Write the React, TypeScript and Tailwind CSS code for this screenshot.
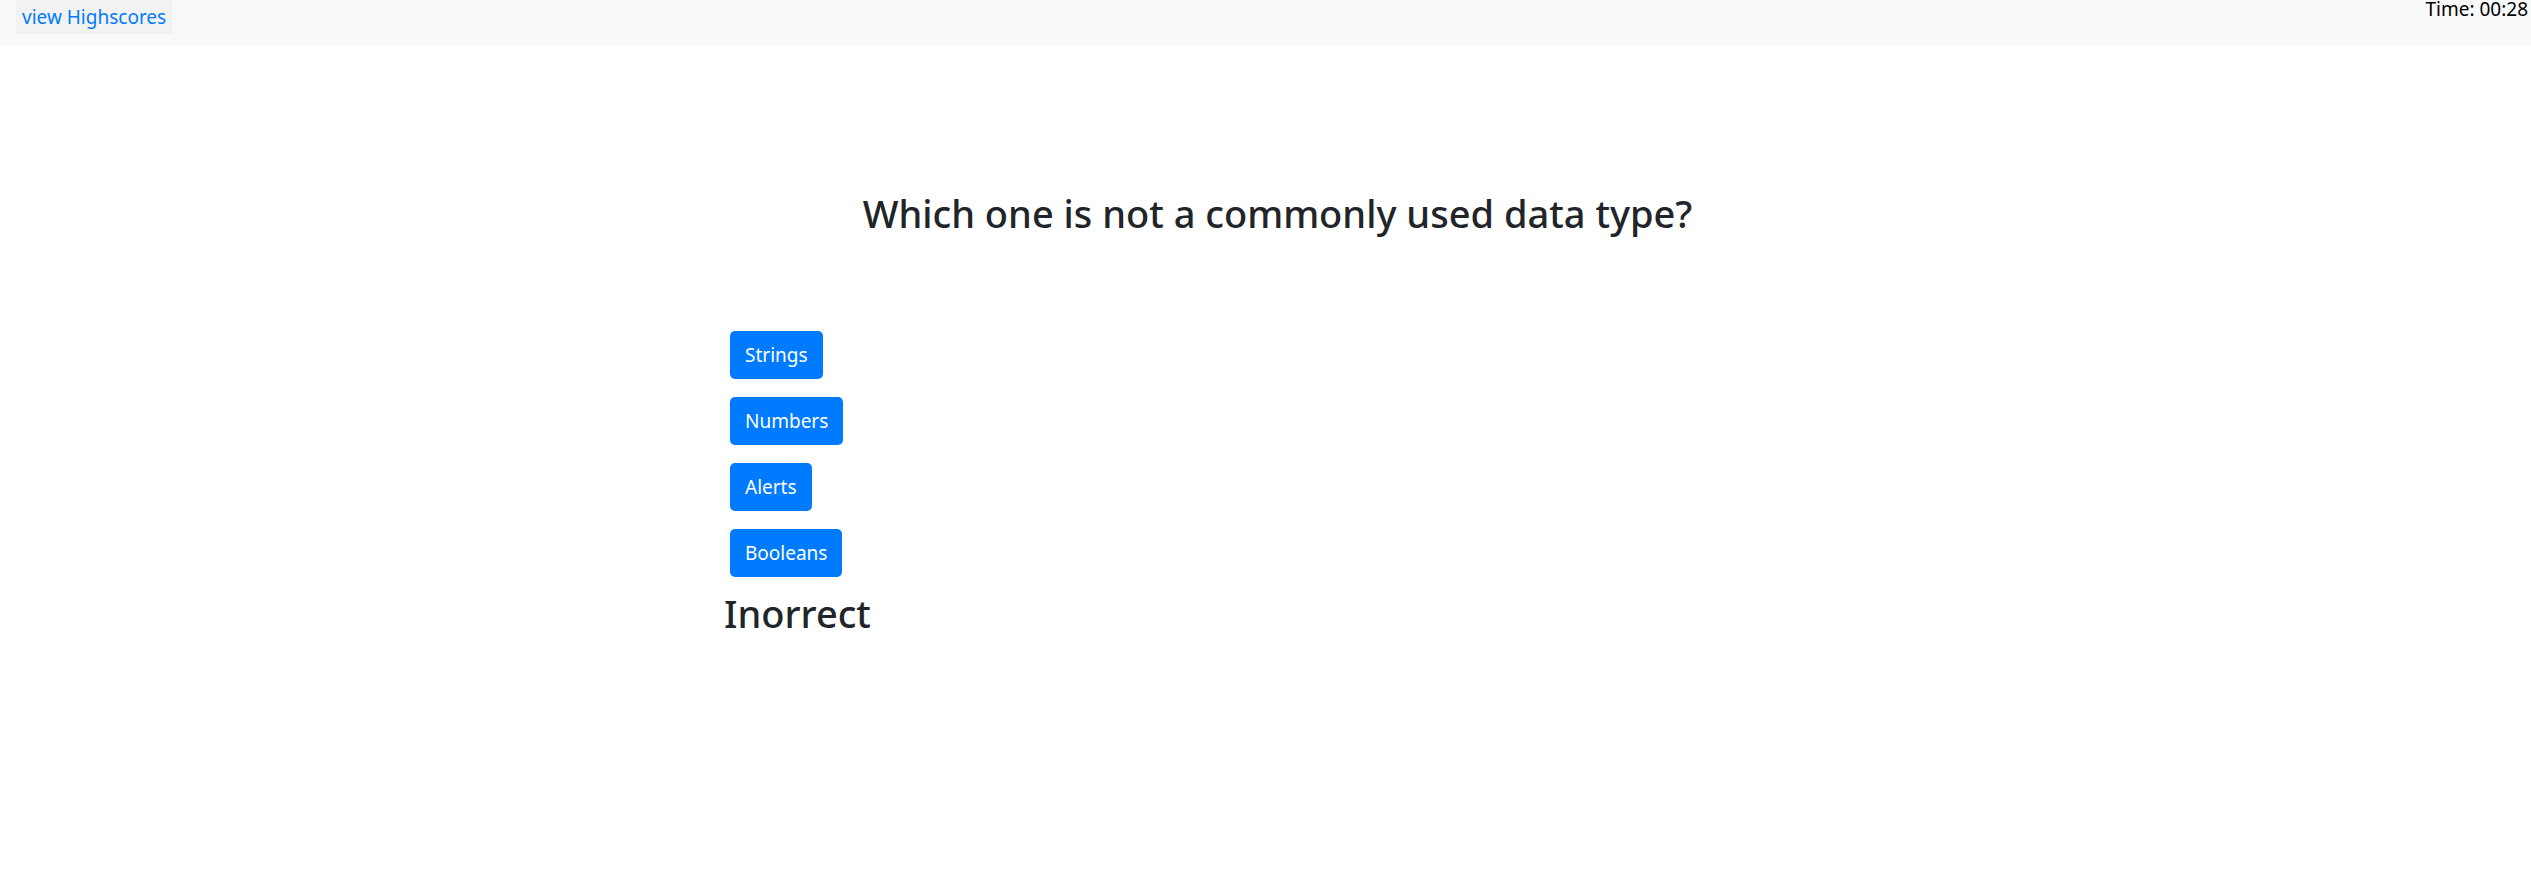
export default function App() {
  const answers = ["Strings", "Numbers", "Alerts", "Booleans"];

  return (
    <div className="min-h-screen bg-white text-[#212529] font-['Noto_Sans','Open_Sans',sans-serif]">
      {/* Top bar */}
      <nav className="flex h-[46px] items-start justify-between bg-[#f8f9fa]">
        <button className="ml-[16px] h-[34px] bg-[#f2f2f2] px-[6px] text-[19px] leading-[30px] text-[#007bff]">
          view Highscores
        </button>
        <div className="pr-[3px] text-[19px] leading-[18px] text-black">Time: 00:28</div>
      </nav>

      {/* Question */}
      <main className="pl-[724px] pr-[700px]">
        <h2 className="mt-[145px] text-center text-[38px] font-medium leading-[1.2]">
          Which one is not a commonly used data type?
        </h2>

        <div className="mt-[94px] flex flex-col items-start gap-[18px] pl-[6px]">
          {answers.map((a) => (
            <button
              key={a}
              className="h-[48px] rounded-[5px] bg-[#007bff] px-[15px] text-[19px] leading-[30px] text-white"
            >
              {a}
            </button>
          ))}
        </div>

        <h2 className="mt-[14px] text-[38px] font-medium leading-[1.2]">Inorrect</h2>
      </main>
    </div>
  );
}
